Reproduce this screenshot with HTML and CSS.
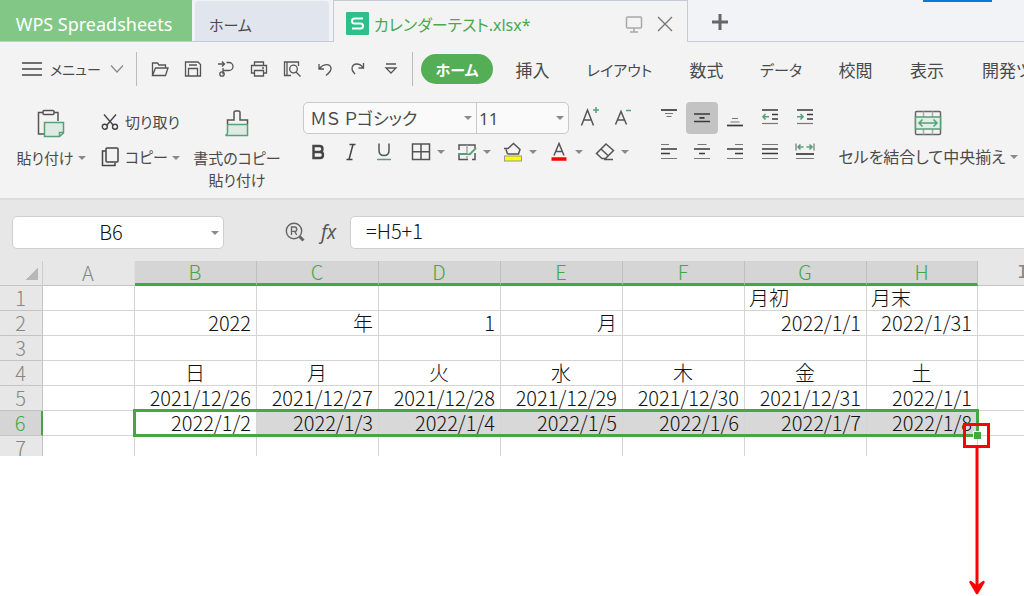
FILE: index.html
```html
<!DOCTYPE html>
<html lang="ja">
<head>
<meta charset="utf-8">
<title>カレンダーテスト.xlsx - WPS Spreadsheets</title>
<link rel="stylesheet" href="styles.css">
</head>
<body>
<header class="titlebar">
  <button class="app-tab">WPS Spreadsheets</button>
  <button class="home-tab">ホーム</button>
  <div class="doc-tab">
    <svg class="doc-logo" width="23" height="23" viewBox="0 0 23 23"><rect width="23" height="23" rx="1" fill="#2ec08b"/><path d="M17 6.500H8.500Q6 6.500 6 9t2.500 2.500h6Q17 11.500 17 14t-2.500 2.500H6" fill="none" stroke="#fff" stroke-width="2"/></svg>
    <span class="doc-name">カレンダーテスト.xlsx*</span>
    <button class="icon-btn" aria-label="表示"><svg width="18" height="18" viewBox="0 0 18 18" fill="none" stroke="#a9a9ab" stroke-width="1.500"><rect x="1.500" y="2" width="15" height="11" rx="1"/><path d="M9 13v4M5 17h8"/></svg></button>
    <button class="icon-btn" aria-label="閉じる"><svg width="16" height="16" viewBox="0 0 16 16" stroke="#777" stroke-width="1.400"><path d="M1 1l14 14M15 1L1 15"/></svg></button>
  </div>
  <button class="new-tab" aria-label="新規"><svg width="18" height="18" viewBox="0 0 18 18" stroke="#666" stroke-width="3"><path d="M9 1v16M1 9h16"/></svg></button>
  <span class="accent"></span>
</header>

<nav class="menubar">
  <button class="menu-btn">
    <svg width="20" height="16" viewBox="0 0 20 16" stroke="#444" stroke-width="1.600"><path d="M0 2h20M0 8h20M0 14h20"/></svg>
    <span class="menu-label">メニュー</span>
    <svg width="14" height="10" viewBox="0 0 14 10" fill="none" stroke="#888" stroke-width="1.200"><path d="M1 1.500l6 6.500 6-6.500"/></svg>
  </button>
  <div class="quick">
    <button aria-label="開く"><svg width="18" height="18" viewBox="0 0 18 18"><path d="M1.500 15.500V3h5l1.500 2h6.500v3M1.500 15.500L4.500 8H17l-2.500 7.500z"/></svg></button>
    <button aria-label="保存"><svg width="18" height="18" viewBox="0 0 18 18"><path d="M1.500 2H14l2.500 2.500V16h-15zM4.500 16V8.500h9V16M5 5h8"/></svg></button>
    <button aria-label="PDF"><svg width="18" height="18" viewBox="0 0 18 18"><path d="M1 4h6M5 1.500L7.500 4 5 6.500M9.500 2.500h2.500a4 4 0 0 1 0 8H5.500M6 8v6.500"/><circle cx="5" cy="14" r="2.200"/></svg></button>
    <button aria-label="印刷"><svg width="18" height="18" viewBox="0 0 18 18"><path d="M4.500 5.500V2h9v3.500M4 13H1.500V5.500h15V13H14M4.500 10.500h9V16h-9zM12 8h2"/></svg></button>
    <button aria-label="印刷プレビュー"><svg width="18" height="18" viewBox="0 0 18 18"><path d="M8 15.500H1.500V2h14v4M4 2v13.500M13 12l4.500 4.500"/><circle cx="10.500" cy="9" r="3.800"/></svg></button>
    <button aria-label="元に戻す"><svg width="18" height="18" viewBox="0 0 18 18"><path d="M3 4v5h5M3.500 8.500C7 4 14 3 15 8c.5 3-2 5-5 7.500"/></svg></button>
    <button aria-label="やり直し"><svg width="18" height="18" viewBox="0 0 18 18"><path d="M14.500 3v5h-5M14 7.500C11 3 4 2.500 3 8c-.5 3 1.500 4.500 3 6"/></svg></button>
    <button aria-label="カスタマイズ"><svg width="18" height="18" viewBox="0 0 18 18"><path d="M4 4h10M4 8h10l-5 5z"/></svg></button>
  </div>
  <div class="tabs">
    <button class="tab active">ホーム</button>
    <button class="tab">挿入</button>
    <button class="tab wide">レイアウト</button>
    <button class="tab">数式</button>
    <button class="tab mid">データ</button>
    <button class="tab">校閲</button>
    <button class="tab short">表示</button>
    <button class="tab last">開発ツール</button>
  </div>
</nav>

<section class="ribbon">
  <button class="big paste">
    <svg width="30" height="30" viewBox="0 0 30 30" fill="none" stroke="#555" stroke-width="1.500"><path d="M7 3.500H2.500V25H8M18 3.500h4V12"/><rect x="7" y="1.500" width="11" height="4" rx="1"/><path d="M8.500 13.500h19V24l-4 3.500h-15zM27.500 23.500h-4v4" fill="#e0eae4" stroke="#57a078"/></svg>
    <span>貼り付け<i class="caret"></i></span>
  </button>
  <div class="stack">
    <button><svg width="18" height="18" viewBox="0 0 18 18" fill="none" stroke="#444" stroke-width="1.400"><path d="M3 1.500l9.500 11M15 1.500l-9.500 11"/><circle cx="3.800" cy="13.800" r="2.500"/><circle cx="14" cy="13.800" r="2.500"/></svg><span>切り取り</span></button>
    <button><svg width="18" height="20" viewBox="0 0 18 20" fill="none" stroke="#444" stroke-width="1.500"><rect x="5" y="1" width="12" height="14" rx="1"/><path d="M4.500 4H1.500v14.500H14V16"/></svg><span>コピー<i class="caret"></i></span></button>
  </div>
  <button class="big painter">
    <svg width="26" height="30" viewBox="0 0 26 30" fill="none" stroke="#555" stroke-width="1.500"><path d="M3.500 15.500h20v11H1.500q2-1 2-3z" fill="#e0eae4" stroke="#57a078"/><path d="M3.500 15v-4H10V3.500q0-1.500 1.500-1.500h3Q16 2 16 3.500V11h7.500v4"/></svg>
    <span>書式のコピー<br>貼り付け</span>
  </button>
  <div class="fontgroup">
    <div class="line">
      <div class="combo">
        <span class="pick name"><select aria-label="フォント"><option>ＭＳ Ｐゴシック</option></select><i class="caret"></i></span>
        <span class="pick size"><select aria-label="サイズ"><option>11</option></select><i class="caret"></i></span>
      </div>
      <button class="grow" aria-label="拡大"><svg width="20" height="22" viewBox="0 0 20 22" fill="none" stroke="#555" stroke-width="1.500"><path d="M1.500 18.500L7.500 3l6 15.500M3.800 13h7.400"/><path d="M13 3h6M16 0v6" stroke="#57a078"/></svg></button>
      <button class="grow" aria-label="縮小"><svg width="20" height="22" viewBox="0 0 20 22" fill="none" stroke="#555" stroke-width="1.500"><path d="M2.500 17.500L8 4.500l5.500 13M4.500 13h7"/><path d="M13 3.500h5" stroke="#57a078"/></svg></button>
    </div>
    <div class="line tools">
      <button aria-label="太字"><svg width="20" height="20" viewBox="0 0 20 20" fill="none" stroke="#444" stroke-width="2.400"><path d="M5.500 4h6q3 0 3 3t-3 3h-6zM5.500 10h6.500q3 0 3 3t-3 3H5.500z"/></svg></button>
      <button aria-label="斜体"><svg width="20" height="20" viewBox="0 0 20 20" fill="none" stroke="#444" stroke-width="1.500"><path d="M8.500 2.500h6M5.500 17.500h6M12 2.500l-4 15"/></svg></button>
      <button aria-label="下線"><svg width="20" height="20" viewBox="0 0 20 20" fill="none" stroke="#555" stroke-width="1.500"><path d="M5 1.500v7q0 5 5 5t5-5v-7"/><path d="M3 17.500h14" stroke="#57a078"/></svg></button>
      <button class="drop" aria-label="罫線"><svg width="20" height="20" viewBox="0 0 20 20" fill="none" stroke="#555" stroke-width="1.500"><rect x="1.500" y="2" width="17" height="15.500"/><path d="M10 2v15.500M1.500 9.800h17"/></svg><i class="caret"></i></button>
      <button class="drop" aria-label="罫線を引く"><svg width="20" height="20" viewBox="0 0 20 20" fill="none" stroke="#555" stroke-width="1.500"><path d="M18 6V3H2v5M2 13v4.500h9M18 11v6.500h-3"/><path d="M10 3v8M10 14v3" stroke="#aaa"/><path d="M1 12h9q3 1 4-1l5-5" stroke="#57a078" stroke-width="1.800"/></svg><i class="caret"></i></button>
      <button class="drop" aria-label="塗りつぶし"><svg width="20" height="20" viewBox="0 0 20 20" fill="none" stroke="#555" stroke-width="1.500"><path d="M4.500 12L3 7.500M1 6.500h4L10.500 1.500l6.500 6-1.500 4.500h-11"/><rect x="1.500" y="14" width="17" height="5" fill="#ff0" stroke="#999" stroke-width="1"/></svg><i class="caret"></i></button>
      <button class="drop" aria-label="文字色"><svg width="20" height="20" viewBox="0 0 20 20" fill="none" stroke="#555" stroke-width="1.500"><path d="M5 13.500L10 1.500l5 12M7 9.500h6"/><path d="M2.500 17h15" stroke="#f00" stroke-width="3.500"/></svg><i class="caret"></i></button>
      <button class="drop" aria-label="クリア"><svg width="20" height="20" viewBox="0 0 20 20" fill="none" stroke="#555" stroke-width="1.500"><path d="M11 2l7.500 6.500-8 8H7l-5.500-5zM6 7l7.500 7M9 17.500h9"/></svg><i class="caret"></i></button>
    </div>
  </div>
  <div class="aligngroup">
    <button aria-label="上揃え"><svg width="18" height="20" viewBox="0 0 18 20"><path d="M1 2h16" class="thick"/><path d="M5 5.500h8M6.500 8.500h5"/></svg></button>
    <button class="on" aria-label="上下中央揃え"><svg width="18" height="20" viewBox="0 0 18 20"><path d="M1 6h16M1 13.500h16M6.500 9.800h5" class="thick"/></svg></button>
    <button aria-label="下揃え"><svg width="18" height="20" viewBox="0 0 18 20"><path d="M6 10.500h6M4.500 14h9"/><path d="M1 17.500h16" class="thick"/></svg></button>
    <button aria-label="インデントを減らす"><svg width="18" height="20" viewBox="0 0 18 20"><path d="M1 2h16M11 6.500h6M11 11h6" class="thick"/><path d="M1 15.500h16"/><path class="green" d="M8 8.800H2M4.500 6L2 8.800l2.500 2.700"/></svg></button>
    <button aria-label="インデントを増やす"><svg width="18" height="20" viewBox="0 0 18 20"><path d="M1 2h16M11 6.500h6M11 11h6" class="thick"/><path d="M1 15.500h16"/><path class="green" d="M1 8.800h6M4.500 6L7 8.800l-2.500 2.700"/></svg></button>
    <button aria-label="左揃え"><svg width="18" height="20" viewBox="0 0 18 20"><path d="M1 2.500h8M1 16.500h16"/><path d="M1 7h16M1 11.500h9" class="thick"/></svg></button>
    <button aria-label="中央揃え"><svg width="18" height="20" viewBox="0 0 18 20"><path d="M4.500 2.500h9M1 16.500h16"/><path d="M1 7h16M6 11.500h6" class="thick"/></svg></button>
    <button aria-label="右揃え"><svg width="18" height="20" viewBox="0 0 18 20"><path d="M9 2.500h8M1 16.500h16"/><path d="M1 7h16M9 11.500h8" class="thick"/></svg></button>
    <button aria-label="両端揃え"><svg width="18" height="20" viewBox="0 0 18 20"><path d="M1 2.500h16M1 16.500h16"/><path d="M1 7h16M1 11.500h16" class="thick"/></svg></button>
    <button aria-label="均等割り付け"><svg width="20" height="20" viewBox="0 0 20 20"><path d="M1 1.500v7M19 1.500v7M1 16.500h18"/><path d="M1 12h18" class="thick"/><path class="green" d="M8.500 5H3M5.500 2.500L3 5l2.500 2.500M11.500 5H17M14.500 2.500L17 5l-2.500 2.500"/></svg></button>
  </div>
  <button class="big merge">
    <svg width="28" height="26" viewBox="0 0 28 26" fill="none" stroke="#666" stroke-width="1.500"><rect x="1.500" y="1.500" width="25" height="23" rx="1"/><path d="M9.500 1.500V7M18.500 1.500V7M9.500 19v5.500M18.500 19v5.500" stroke="#aaa"/><rect x="1.500" y="7" width="25" height="12" fill="#e0eee6" stroke="#57a078"/><path d="M5 13h18M8.500 9.500L5 13l3.500 3.500M19.500 9.500L23 13l-3.500 3.500" stroke="#57a078"/></svg>
    <span>セルを結合して中央揃え<i class="caret"></i></span>
  </button>
</section>

<section class="formulabar">
  <div class="namebox"><input aria-label="名前ボックス" value="B6"><i class="caret"></i></div>
  <button class="icon-btn find" aria-label="検索"><svg width="22" height="22" viewBox="0 0 22 22" fill="none" stroke="#666" stroke-width="1.400"><circle cx="10" cy="10" r="7.700"/><path d="M7.500 14V6h3.200q2 0 2 2.200t-2 2.200H7.500M10.700 10.400l2 3.600"/><path d="M15.500 15.500l4 4" stroke-width="3"/></svg></button>
  <button class="fx" aria-label="関数">fx</button>
  <input class="formula" aria-label="数式" value="=H5+1">
</section>

<main class="sheet">
<table>
  <colgroup><col class="c-row"><col class="c-a"><col span="6" class="c-day"><col class="c-h"><col class="c-i"></colgroup>
  <thead><tr><th class="corner"></th><th>A</th><th class="sel">B</th><th class="sel">C</th><th class="sel">D</th><th class="sel">E</th><th class="sel">F</th><th class="sel">G</th><th class="sel">H</th><th class="serif">I</th></tr></thead>
  <tbody>
  <tr><th>1</th><td></td><td></td><td></td><td></td><td></td><td></td><td class="l">月初</td><td class="l">月末</td><td></td></tr>
  <tr><th>2</th><td></td><td>2022</td><td>年</td><td>1</td><td>月</td><td></td><td>2022/1/1</td><td>2022/1/31</td><td></td></tr>
  <tr><th>3</th><td></td><td></td><td></td><td></td><td></td><td></td><td></td><td></td><td></td></tr>
  <tr class="days"><th>4</th><td></td><td>日</td><td>月</td><td>火</td><td>水</td><td>木</td><td>金</td><td>土</td><td></td></tr>
  <tr><th>5</th><td></td><td>2021/12/26</td><td>2021/12/27</td><td>2021/12/28</td><td>2021/12/29</td><td>2021/12/30</td><td>2021/12/31</td><td>2022/1/1</td><td></td></tr>
  <tr class="picked"><th>6</th><td></td><td class="s first">2022/1/2</td><td class="s">2022/1/3</td><td class="s">2022/1/4</td><td class="s">2022/1/5</td><td class="s">2022/1/6</td><td class="s">2022/1/7</td><td class="s end">2022/1/8<span class="handle"></span>
    <svg class="mark" width="28" height="173" viewBox="0 0 28 173" fill="none" stroke="#f00" stroke-width="3"><rect x="1.500" y="1.500" width="24" height="22"/><path d="M14 24v140"/><path d="M7.500 159l6.500 11 6.500-11-6.500 5z" fill="#f00" stroke-width="2.500" stroke-linejoin="round"/></svg></td><td></td></tr>
  <tr class="cut"><th><div>7</div></th><td></td><td></td><td></td><td></td><td></td><td></td><td></td><td></td><td></td></tr>
  </tbody>
</table>
</main>
</body>
</html>
```
FILE: styles.css
```css
* { box-sizing: border-box; }
body {
  display: flex;
  flex-direction: column;
  min-height: 100vh;
  margin: 0;
  background: #fff;
  color: #4a4a4a;
  font-family: "Noto Sans", "Noto Sans CJK JP", sans-serif;
  font-size: 15px;
  font-feature-settings: "palt";
}
button, input, select {
  font: inherit;
  font-feature-settings: inherit;
  color: inherit;
  background: none;
  border: 0;
  padding: 0;
  margin: 0;
}
button { display: flex; align-items: center; justify-content: center; white-space: nowrap; }
svg { flex: none; display: block; }

.caret {
  display: inline-block;
  flex: none;
  border: 4px solid transparent;
  border-top-color: #8a8a8a;
  border-bottom: 0;
  margin-left: 4px;
  vertical-align: 4px;
}

/* title bar */
.titlebar {
  position: relative;
  display: flex;
  height: 42px;
  background: #f2f3f7;
  border-bottom: 1px solid #c6cad6;
}
.app-tab { width: 192px; background: #82c785; color: #fff; font-size: 18px; padding: 6px 4px 0 0; }
.home-tab {
  width: 134px;
  margin: 1px 4px 0 3px;
  padding: 6px 0 0 14px;
  justify-content: flex-start;
  background: #e1e5ee;
  border-radius: 4px 4px 0 0;
  font-size: 15px;
}
.doc-tab {
  display: flex;
  align-items: center;
  width: 355px;
  margin-bottom: -1px;
  padding: 4px 12px 0 12px;
  background: #f3f3f3;
  border: 1px solid #c6cad6;
  border-bottom: 0;
}
.doc-name { flex: 1; margin-left: 5px; color: #4aa94c; font-size: 16px; white-space: nowrap; }
.icon-btn { width: 20px; height: 22px; }
.doc-tab .icon-btn + .icon-btn { margin-left: 11px; }
.new-tab { width: 64px; padding-top: 3px; }
.accent { position: absolute; top: 0; right: 32px; width: 69px; height: 2px; background: #0a78d6; }

/* menu */
.menubar { display: flex; align-items: center; height: 54px; background: #f3f3f3; overflow: hidden; }
.menu-btn { height: 34px; padding: 0 12px 0 22px; border-right: 1px solid #bbb; width: 137px; flex: none; justify-content: flex-start; }
.menu-label { flex: 1; margin-left: 8px; text-align: left; font-size: 14px; }
.quick { display: flex; flex: none; height: 34px; width: 276px; padding-left: 6px; border-right: 1px solid #bbb; }
.quick button { width: 33px; }
.quick svg { fill: none; stroke: #555; stroke-width: 1.3; }
.tabs { display: flex; align-items: center; padding-left: 8px; }
.tab { flex: none; width: 79px; height: 30px; font-size: 17px; }
.tab.active { width: 72px; background: #54ae55; color: #fff; font-size: 15px; font-weight: 700; border-radius: 15px; }
.tab.wide { width: 95px; font-size: 15px; }
.tab.mid { width: 70px; font-size: 15px; }
.tab.short { width: 64px; }
.tab.last { width: 120px; padding-left: 23px; justify-content: flex-start; }

/* ribbon */
.ribbon {
  display: flex;
  align-items: flex-start;
  height: 104px;
  padding-top: 6px;
  background: #f3f3f3;
  border-bottom: 2px solid #dcdcdc;
  overflow: hidden;
}
.big { flex-direction: column; flex: none; line-height: 22px; }
.big span { margin-top: 8px; }
.paste { width: 102px; padding-top: 7px; }
.stack { display: flex; flex-direction: column; flex: none; width: 90px; padding-top: 2px; }
.stack button { height: 35px; justify-content: flex-start; gap: 6px; }
.stack svg { margin-left: -1px; }
.stack .caret { vertical-align: 3px; }
.painter { width: 90px; padding-top: 7px; }
.fontgroup { flex: none; width: 369px; padding-left: 21px; }
.line { display: flex; height: 32px; align-items: center; }
.combo { display: flex; width: 266px; height: 32px; background: #fafafa; border: 1px solid #c9c9c9; border-radius: 5px; }
.pick { position: relative; display: flex; }
.pick select { appearance: none; width: 100%; font-size: 17px; padding-left: 6px; }
.pick .caret { position: absolute; right: 4px; top: 13px; }
.name { width: 173px; border-right: 1px solid #c9c9c9; }
.size { flex: 1; }
.size select { padding-left: 2px; }
.grow { width: 33px; }
.combo + .grow { margin-left: 4px; }
.tools { margin: 2px 0 0 -2px; }
.tools button { width: 33px; }
.tools .drop { width: 46px; }
.drop .caret { margin-left: 6px; }
.tools button:nth-child(3) { margin-right: 5px; }
.aligngroup { display: grid; flex: none; grid-template-columns: 34px 32px 34px 36px 33px; grid-auto-rows: 32px; row-gap: 2px; width: 183px; margin-left: 1px; }
.aligngroup svg { fill: none; stroke: #777; stroke-width: 1.2; }
.aligngroup .thick { stroke: #3a3a3a; stroke-width: 1.7; }
.aligngroup .green { stroke: #57a078; stroke-width: 1.6; }
.aligngroup .on { background: #c3c3c3; border-radius: 4px; }
.merge { width: 186px; padding-top: 8px; font-size: 16px; }
.merge span { margin-top: 10px; }

/* formula bar */
.formulabar { display: flex; align-items: center; height: 61px; padding: 3px 0 0 12px; background: #e7e7e7; color: #111; }
.namebox { position: relative; width: 212px; height: 33px; background: #fff; border: 1px solid #cfcfcf; border-radius: 5px; }
.namebox input { width: 100%; height: 100%; padding: 0 14px 2px 0; text-align: center; font-size: 20px; }
.namebox .caret { position: absolute; right: 4px; top: 14px; }
.formula, .namebox input { font-family: "Noto Sans CJK JP", sans-serif; font-weight: 300; }
.find { width: 24px; margin-left: 59px; }
.fx { width: 43px; color: #555; font: italic 19px "Noto Sans", sans-serif; }
.formula { flex: 1; height: 33px; min-width: 0; padding: 0 0 3px 15px; background: #fff; border: 1px solid #cfcfcf; border-right: 0; border-radius: 5px 0 0 5px; font-size: 20px; }

/* grid */
.sheet { flex: 1; overflow-x: clip; }
table { table-layout: fixed; width: 1070px; border-spacing: 0; font-family: "Noto Sans CJK JP", sans-serif; font-size: 20px; font-weight: 300; line-height: 24px; font-feature-settings: normal; }
.c-row { width: 43px; }
.c-a { width: 92px; }
.c-day { width: 122px; }
.c-h { width: 111px; }
th, td { height: 25px; padding: 0 5px 0 4px; border-right: 1px solid #d4d4d4; border-bottom: 1px solid #d4d4d4; white-space: nowrap; }
th { background: #e7e7e7; color: #858585; font-weight: 300; border-color: #c4c4c4; }
td { color: #111; text-align: right; }
thead th { border-right-color: #e0e0e0; }
thead .corner { border-right-color: #ccc; background: linear-gradient(135deg, transparent 50%, #b8b8b8 50%) 25px 6px / 13px 13px no-repeat #e7e7e7; }
thead .sel { background: #d5d5d5; color: #43a744; border-bottom: 3px solid #43a744; border-right-color: #bfbfbf; line-height: 22px; }
thead .serif { font-family: "Liberation Mono", monospace; }
.l { text-align: left; }
.days td { text-align: center; }
.picked th { background: #d5d5d5; color: #43a744; border-right: 2px solid #43a744; }
.s { position: relative; background: #d8d8d8; }
.s.first { background: #fff; }
.s::after { content: ""; position: absolute; inset: -2px -1px; border: solid #43a744; border-width: 3px 0; }
.s.first::after { left: -2px; border-left-width: 3px; }
.s.end::after { right: -2px; border-right-width: 3px; }
.handle { position: absolute; z-index: 1; right: -4px; bottom: -4px; width: 8px; height: 8px; background: #43a744; border: solid #fff; border-width: 1px 0 0 1px; }
.mark { position: absolute; z-index: 2; right: -14px; top: 12px; }
.cut th, .cut td { height: 20px; border-bottom: 0; }
.cut div { height: 20px; overflow: hidden; }
```
